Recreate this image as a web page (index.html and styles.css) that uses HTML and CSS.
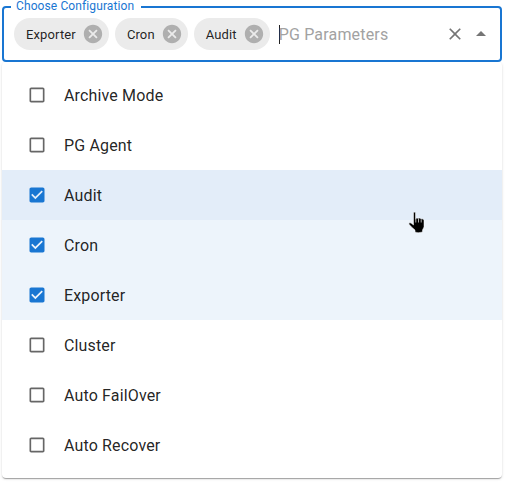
FILE: index.html
```html
<!DOCTYPE html>
<html lang="en">
<head>
<meta charset="utf-8">
<title>Choose Configuration</title>
<link rel="stylesheet" href="styles.css">
</head>
<body>
<svg class="defs" aria-hidden="true">
  <symbol id="cancel" viewBox="0 0 24 24"><path d="M12 2C6.47 2 2 6.47 2 12s4.47 10 10 10 10-4.47 10-10S17.53 2 12 2zm5 13.59L15.59 17 12 13.41 8.41 17 7 15.59 10.59 12 7 8.41 8.41 7 12 10.59 15.59 7 17 8.41 13.41 12 17 15.59z"/></symbol>
  <symbol id="box" viewBox="0 0 24 24"><path d="M19 5v14H5V5h14m0-2H5c-1.1 0-2 .9-2 2v14c0 1.1.9 2 2 2h14c1.1 0 2-.9 2-2V5c0-1.1-.9-2-2-2z"/></symbol>
  <symbol id="checked" viewBox="0 0 24 24"><path d="M19 3H5c-1.11 0-2 .9-2 2v14c0 1.1.89 2 2 2h14c1.11 0 2-.9 2-2V5c0-1.1-.89-2-2-2zm-9 14l-5-5 1.41-1.41L10 14.17l7.59-7.59L19 8l-9 9z"/></symbol>
</svg>
<div class="autocomplete">
  <div class="field">
    <span class="label">Choose Configuration</span>
    <div class="chip"><span>Exporter</span><svg><use href="#cancel"/></svg></div>
    <div class="chip"><span>Cron</span><svg><use href="#cancel"/></svg></div>
    <div class="chip"><span>Audit</span><svg><use href="#cancel"/></svg></div>
    <div class="input"><i class="caret"></i>PG Parameters</div>
    <svg class="clear" viewBox="0 0 24 24"><path d="M19 6.41L17.59 5 12 10.59 6.41 5 5 6.41 10.59 12 5 17.59 6.41 19 12 13.41 17.59 19 19 17.59 13.41 12z"/></svg>
    <svg class="arrow" viewBox="0 0 24 24"><path d="M7 14l5-5 5 5z"/></svg>
  </div>
  <ul class="menu">
    <li class="option"><svg><use href="#box"/></svg>Archive Mode</li>
    <li class="option"><svg><use href="#box"/></svg>PG Agent</li>
    <li class="option selected focused"><svg><use href="#checked"/></svg>Audit</li>
    <li class="option selected"><svg><use href="#checked"/></svg>Cron</li>
    <li class="option selected"><svg><use href="#checked"/></svg>Exporter</li>
    <li class="option"><svg><use href="#box"/></svg>Cluster</li>
    <li class="option"><svg><use href="#box"/></svg>Auto FailOver</li>
    <li class="option"><svg><use href="#box"/></svg>Auto Recover</li>
  </ul>
</div>
<svg class="pointer" viewBox="0 0 18 23"><path d="M5.5 1.5Q7 .5 7.5 2V8Q9 6.5 10.3 7.5Q12 6.5 13 8Q15.5 7 16 9.5V16L14.5 19V21Q9.500 22.500 7 21V19L3.500 16L.8 13Q1 11.300 3 12L5.500 14Z"/><path class="fingers" d="M7.800 8v3.500M10.500 8v3.500M13.200 8.500v3"/></svg>
</body>
</html>
```
FILE: styles.css
```css
* { box-sizing: border-box; }
body {
  margin: 0;
  min-height: 485px;
  padding: 6px 0 0 2px;
  background: #fff;
  color: rgba(0, 0, 0, .87);
  font-family: Roboto, "Liberation Sans", sans-serif;
}
.defs { display: none; }
.autocomplete { width: 500px; }
.field {
  position: relative;
  display: flex;
  align-items: center;
  height: 56px;
  padding: 0 7px 0 10px;
  border: 2px solid #1976d2;
  border-radius: 4px;
}
.label {
  position: absolute;
  top: -10px;
  left: 7px;
  width: 130px;
  padding-left: 5px;
  background: #fff;
  color: #1976d2;
  font-size: 12px;
  line-height: 16px;
  letter-spacing: .11px;
  white-space: nowrap;
}
.chip {
  display: flex;
  align-items: center;
  height: 32px;
  margin-right: 6px;
  border-radius: 16px;
  background: #ebebeb;
  font-size: 13px;
  letter-spacing: .13px;
}
.chip span { padding: 0 12px; }
.chip svg {
  width: 22px;
  height: 22px;
  margin: 0 5px 0 -6px;
  fill: #afafaf;
}
.input {
  display: flex;
  align-items: center;
  flex: 1;
  margin-left: 3px;
  color: #a2a2a2;
  font-size: 16px;
  letter-spacing: .17px;
  white-space: nowrap;
}
.caret { width: 1px; height: 19px; margin-right: -1px; background: #222; }
.clear { width: 20px; height: 20px; margin-right: 4px; fill: #757575; }
.arrow { width: 24px; height: 24px; fill: #757575; }
.menu {
  height: 416px;
  margin: 0;
  padding: 8px 0;
  border-radius: 4px;
  list-style: none;
  box-shadow: 0 2px 1px -1px rgba(0, 0, 0, .2), 0 1px 1px rgba(0, 0, 0, .14), 0 1px 3px rgba(0, 0, 0, .12);
}
.option {
  display: flex;
  align-items: center;
  height: 50px;
  padding-left: 25px;
  font-size: 16px;
  letter-spacing: .15px;
}
.option svg { width: 20px; height: 20px; margin-right: 17px; fill: #666; }
.selected { background: #edf4fb; }
.selected svg { fill: #1976d2; }
.focused { background: #e3edf9; }
.pointer {
  position: absolute;
  left: 408px;
  top: 211px;
  width: 18px;
  height: 23px;
  fill: #000;
  stroke: #fff;
  stroke-width: .5;
}
.fingers { fill: none; stroke: #ddd; stroke-width: .8; }
```
